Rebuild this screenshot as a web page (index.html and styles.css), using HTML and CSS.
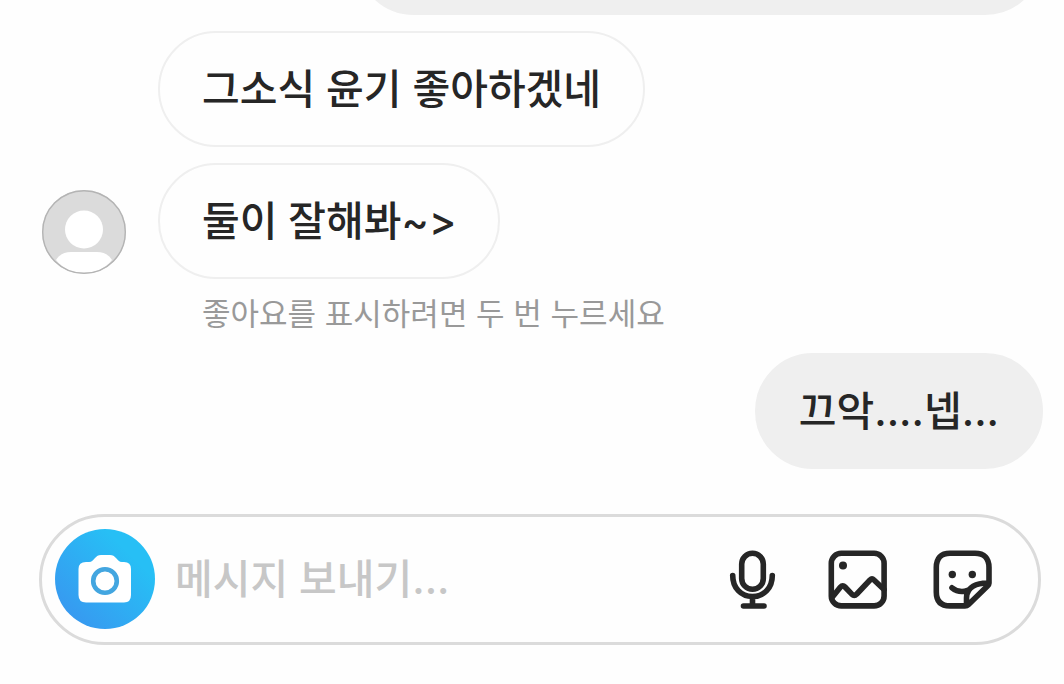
FILE: index.html
```html
<!DOCTYPE html>
<html lang="ko">
<head>
  <meta charset="UTF-8">
  <meta name="viewport" content="width=device-width, initial-scale=1">
  <title>메시지</title>
  <link rel="stylesheet" href="styles.css">
</head>
<body>

  <main class="chat">
    <div class="bubble sent previous"></div>

    <div class="received">
      <div class="bubble">그소식 윤기 좋아하겠네</div>
      <div class="last">
        <svg class="avatar" viewBox="0 0 84 84" aria-hidden="true">
          <circle cx="42" cy="42" r="42" fill="#dbdbdb"/>
          <circle cx="42" cy="39.500" r="19" fill="#fff"/>
          <path d="M14 70C17 65 22 62 29 62H55C62 62 67 65 70 70C63 79 53 83 42 83S21 79 14 70Z" fill="#fff"/>
          <circle cx="42" cy="42" r="41.300" fill="none" stroke="#b4b4b4" stroke-width="1.400"/>
        </svg>
        <div class="bubble">둘이 잘해봐~&gt;</div>
      </div>
      <p class="hint">좋아요를 표시하려면 두 번 누르세요</p>
    </div>

    <div class="bubble sent">끄악....넵...</div>
  </main>

  <form class="composer">
    <button type="button" class="camera" aria-label="카메라">
      <svg viewBox="0 0 100 100">
        <path d="M31 33H34C37 33 38 31 40 29C42 27 43 26 46 26H55C58 26 59 27 61 29C63 31 64 33 67 33H69Q76 33 76 40V66Q76 73.500 69 73.500H31Q23.500 73.500 23.500 66V40Q23.500 33 31 33Z" fill="#fff"/>
        <circle cx="50" cy="52" r="11.800" fill="none" stroke="#43a6e0" stroke-width="4.600"/>
      </svg>
    </button>
    <input class="message" type="text" placeholder="메시지 보내기..." aria-label="메시지 보내기">
    <div class="actions">
      <button type="button" aria-label="음성 메시지">
        <svg class="icon" viewBox="0 0 60 60">
          <rect x="18.700" y="4.300" width="21.600" height="36" rx="10.800"/>
          <path d="M9.700 26.500C9.700 39 18 47.500 29.500 47.500S49.300 39 49.300 26.500M29.500 48V57M20.500 57H41"/>
        </svg>
      </button>
      <button type="button" aria-label="사진">
        <svg class="icon" viewBox="0 0 60 60">
          <rect x="3.300" y="4.300" width="52.800" height="52.600" rx="10"/>
          <circle class="dot" cx="15" cy="16.500" r="4"/>
          <path d="M4 48.500L12.500 38Q14.700 35.500 17 38L23.800 45.200Q26.300 47.500 28.800 45L42 31Q44 29 46 31L56 40.500"/>
        </svg>
      </button>
      <button type="button" aria-label="스티커">
        <svg class="icon" viewBox="0 0 60 60">
          <path d="M56 34V18.500Q56 4.300 42 4.300H17Q3.300 4.300 3.300 18.500V43Q3.300 56.900 17 56.900H32Q34 56.900 35.500 55.400L54.500 37Q56 35.500 56 34C44 33.500 33.500 38 33.500 49V56"/>
          <path d="M19 38.800Q26 44.500 34.500 41.500"/>
          <circle class="dot" cx="19.300" cy="25.500" r="3.700"/>
          <circle class="dot" cx="39.300" cy="25.500" r="3.700"/>
        </svg>
      </button>
    </div>
  </form>

</body>
</html>
```
FILE: styles.css
```css
* { box-sizing: border-box; }
body {
  margin: 0;
  background: #fefefe;
  color: #262626;
  font-family: Inter, "Noto Sans CJK KR", sans-serif;
  font-size: 41px;
  font-weight: 500;
  overflow: hidden;
}
.chat { display: flex; flex-direction: column; padding: 0 21px 0 42px; }

.bubble {
  padding: 28px 42px;
  border: 2px solid #efefef;
  border-radius: 58px;
  line-height: 56px;
}
.sent { align-self: flex-end; background: #efefef; }

/* older message, mostly scrolled off the top */
.previous { width: 687px; max-width: 100%; height: 116px; margin-top: -101px; }

.received { display: flex; flex-direction: column; align-items: flex-start; gap: 16px; padding-left: 116px; margin: 16px 0; }
.last { display: flex; align-items: flex-end; gap: 32px; margin-left: -116px; }
.avatar { width: 84px; height: 84px; margin-bottom: 5px; flex: none; }
.hint { margin: -4px 0 0 44px; color: #999; font-size: 31px; font-weight: 400; line-height: 46px; }

.composer {
  display: flex;
  align-items: center;
  margin: 45px 23px 0 39px;
  padding: 12px 45px 13px 13px;
  border: 3px solid #dbdbdb;
  border-radius: 66px;
}
button { padding: 0; border: 0; background: none; cursor: pointer; }
button svg { display: block; }
.camera { flex: none; width: 100px; height: 100px; border-radius: 50%; background: linear-gradient(45deg, #3897f0 10%, #27bff5 75%); }
.message {
  flex: 1;
  min-width: 0;
  height: 60px;
  padding: 0 20px;
  border: 0;
  outline: 0;
  background: none;
  color: inherit;
  font: inherit;
}
.message::placeholder { color: #c7c7c7; opacity: 1; }
.actions { display: flex; gap: 45px; }
.icon { width: 60px; height: 60px; fill: none; stroke: #262626; stroke-width: 5.6; stroke-linecap: round; stroke-linejoin: round; }
.dot { fill: #262626; stroke: none; }
```
